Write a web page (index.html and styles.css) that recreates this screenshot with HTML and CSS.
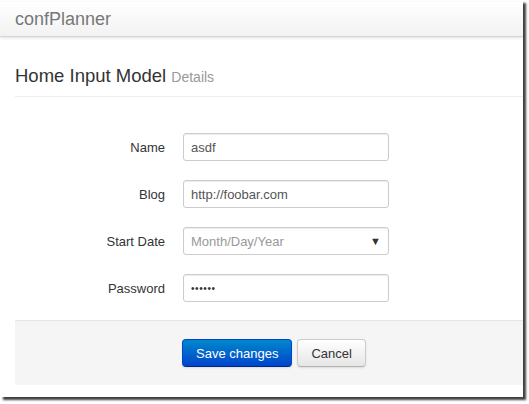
FILE: index.html
```html
<!DOCTYPE html>
<html>
<head>
<meta charset="utf-8">
<link rel="stylesheet" href="styles.css">
</head>
<body>
<div class="frame">
  <div class="navbar"><span class="brand">confPlanner</span></div>
  <div class="content">
    <div class="page-header"><h1>Home Input Model <small>Details</small></h1></div>
    <form class="form">
      <div class="row"><label>Name</label><div class="input">asdf</div></div>
      <div class="row"><label>Blog</label><div class="input">http://foobar.com</div></div>
      <div class="row"><label>Start Date</label><div class="input select"><span class="ph">Month/Day/Year</span><span class="caret">&#9660;</span></div></div>
      <div class="row"><label>Password</label><div class="input pw">&bull;&bull;&bull;&bull;&bull;&bull;</div></div>
      <div class="actions">
        <button type="button" class="btn primary">Save changes</button>
        <button type="button" class="btn">Cancel</button>
      </div>
    </form>
  </div>
</div>
</body>
</html>
```
FILE: styles.css
```css
html, body { margin: 0; padding: 0; background: #fff; }
body { font-family: "Liberation Sans", Arial, sans-serif; width: 529px; height: 404px; overflow: hidden; }
.frame {
  width: 523px; height: 397px; background: #fff; position: relative;
  box-shadow: 3px 3px 2px rgba(0,0,0,0.75);
  overflow: hidden;
}
.navbar {
  margin-top: 2px;
  height: 34px;
  background: linear-gradient(#ffffff, #f2f2f2);
  border-bottom: 1px solid #d4d4d4;
  box-shadow: 0 1px 3px rgba(0,0,0,0.12);
  display: flex; align-items: center;
  padding-left: 15px;
}
.brand { font-size: 18px; color: #777; padding-top: 1px; }
.content { padding: 0 0 0 15px; }
.page-header { margin-top: 27px; padding-bottom: 7px; border-bottom: 1px solid #eee; }
h1 { margin: 0; font-size: 18.5px; font-weight: normal; color: #333; line-height: 24px; }
h1 small { font-size: 14px; color: #999; }
.form { margin-top: 36px; }
.row { display: flex; align-items: center; height: 28px; margin-bottom: 19px; }
.row:nth-child(4) { margin-bottom: 18px; }
.row label { width: 150px; text-align: right; font-size: 13px; color: #333; padding-right: 18px; }
.input {
  box-sizing: border-box; width: 206px; height: 28px;
  border: 1px solid #ccc; border-radius: 3px;
  box-shadow: inset 0 1px 1px rgba(0,0,0,0.075);
  font-size: 13px; color: #555; padding: 0 7px;
  display: flex; align-items: center;
}
.select { justify-content: space-between; }
.ph { color: #999; }
.caret { font-size: 11px; color: #333; }
.pw { font-size: 10px; letter-spacing: 0.6px; color: #333; }
.actions {
  background: #f5f5f5; border-top: 1px solid #e5e5e5;
  height: 64px; display: flex; align-items: center; justify-content: center; gap: 5px;
  padding-left: 10px;
}
.btn {
  font-family: "Liberation Sans", Arial, sans-serif;
  height: 28px; padding: 0 13px; font-size: 13px; color: #333;
  border: 1px solid #ccc; border-bottom-color: #b3b3b3; border-radius: 4px;
  background: linear-gradient(#ffffff, #e6e6e6);
  box-shadow: 0 1px 2px rgba(0,0,0,0.1);
}
.primary {
  color: #fff; padding: 0 13px;
  background: linear-gradient(#0088cc, #0044cc);
  border-color: #0044cc #0044cc #002a80;
}
```
